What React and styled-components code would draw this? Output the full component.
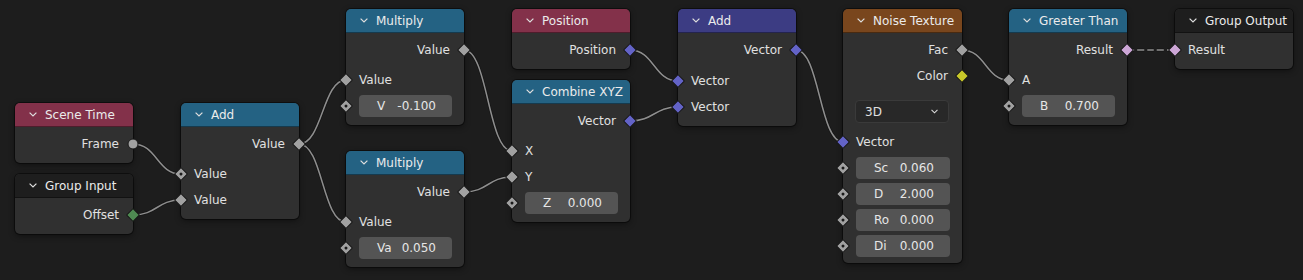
import React from "react";
import styled, { createGlobalStyle } from "styled-components";

const HEADER_H = 24;
const PAD_TOP = 4;
const ROW_H = 26;
const GAP_H = 4;
const DROP_H = 40;

const HEAD = {
  input: "#83314a",
  converter: "#246283",
  vector: "#3c3c83",
  texture: "#79461d",
  group: "#1e1e1e",
};

const SOCK = {
  float: "#a1a1a1",
  vector: "#6363c7",
  color: "#c7c729",
  bool: "#cca6d6",
  int: "#4f8a52",
};

const nodes = {
  scene: {
    title: "Scene Time", head: HEAD.input, x: 15, y: 103, w: 118,
    rows: [{ kind: "out", label: "Frame", sock: SOCK.float, shape: "circle" }],
  },
  groupIn: {
    title: "Group Input", head: HEAD.group, x: 15, y: 174, w: 118,
    rows: [{ kind: "out", label: "Offset", sock: SOCK.int }],
  },
  add: {
    title: "Add", head: HEAD.converter, x: 181, y: 103, w: 118,
    rows: [
      { kind: "out", label: "Value", sock: SOCK.float },
      { kind: "gap" },
      { kind: "in", label: "Value", sock: SOCK.float, shape: "dot" },
      { kind: "in", label: "Value", sock: SOCK.float },
    ],
  },
  mul1: {
    title: "Multiply", head: HEAD.converter, x: 346, y: 9, w: 118,
    rows: [
      { kind: "out", label: "Value", sock: SOCK.float },
      { kind: "gap" },
      { kind: "in", label: "Value", sock: SOCK.float },
      { kind: "field", label: "V", value: "-0.100", sock: SOCK.float, shape: "dot" },
    ],
  },
  mul2: {
    title: "Multiply", head: HEAD.converter, x: 346, y: 151, w: 118,
    rows: [
      { kind: "out", label: "Value", sock: SOCK.float },
      { kind: "gap" },
      { kind: "in", label: "Value", sock: SOCK.float },
      { kind: "field", label: "Va", value: "0.050", sock: SOCK.float, shape: "dot" },
    ],
  },
  position: {
    title: "Position", head: HEAD.input, x: 512, y: 9, w: 118,
    rows: [{ kind: "out", label: "Position", sock: SOCK.vector }],
  },
  combine: {
    title: "Combine XYZ", head: HEAD.converter, x: 512, y: 80, w: 118,
    rows: [
      { kind: "out", label: "Vector", sock: SOCK.vector },
      { kind: "gap" },
      { kind: "in", label: "X", sock: SOCK.float },
      { kind: "in", label: "Y", sock: SOCK.float },
      { kind: "field", label: "Z", value: "0.000", sock: SOCK.float, shape: "dot" },
    ],
  },
  vadd: {
    title: "Add", head: HEAD.vector, x: 678, y: 9, w: 118,
    rows: [
      { kind: "out", label: "Vector", sock: SOCK.vector },
      { kind: "gap", size: 5 },
      { kind: "in", label: "Vector", sock: SOCK.vector },
      { kind: "in", label: "Vector", sock: SOCK.vector },
    ],
  },
  noise: {
    title: "Noise Texture", head: HEAD.texture, x: 843, y: 9, w: 119, padBottom: 4,
    rows: [
      { kind: "out", label: "Fac", sock: SOCK.float },
      { kind: "out", label: "Color", sock: SOCK.color },
      { kind: "drop", label: "3D" },
      { kind: "in", label: "Vector", sock: SOCK.vector },
      { kind: "field", label: "Sc", value: "0.060", sock: SOCK.float, shape: "dot" },
      { kind: "field", label: "D", value: "2.000", sock: SOCK.float, shape: "dot" },
      { kind: "field", label: "Ro", value: "0.000", sock: SOCK.float, shape: "dot" },
      { kind: "field", label: "Di", value: "0.000", sock: SOCK.float, shape: "dot" },
    ],
  },
  greater: {
    title: "Greater Than", head: HEAD.converter, x: 1009, y: 9, w: 118,
    rows: [
      { kind: "out", label: "Result", sock: SOCK.bool },
      { kind: "gap" },
      { kind: "in", label: "A", sock: SOCK.float },
      { kind: "field", label: "B", value: "0.700", sock: SOCK.float, shape: "dot" },
    ],
  },
  groupOut: {
    title: "Group Output", head: HEAD.group, x: 1175, y: 9, w: 118,
    rows: [{ kind: "in", label: "Result", sock: SOCK.bool }],
  },
};

const links = [
  ["scene", 0, "add", 2],
  ["groupIn", 0, "add", 3],
  ["add", 0, "mul1", 2],
  ["add", 0, "mul2", 2],
  ["mul1", 0, "combine", 2],
  ["mul2", 0, "combine", 3],
  ["position", 0, "vadd", 2],
  ["combine", 0, "vadd", 3],
  ["vadd", 0, "noise", 3],
  ["noise", 0, "greater", 2],
  ["greater", 0, "groupOut", 0, true],
];

const rowHeight = (r) =>
  r.kind === "gap" ? r.size || GAP_H : r.kind === "drop" ? DROP_H : ROW_H;

const socketPos = (id, index) => {
  const n = nodes[id];
  let y = n.y + HEADER_H + PAD_TOP;
  for (let i = 0; i < index; i++) y += rowHeight(n.rows[i]);
  const out = n.rows[index].kind === "out";
  return { x: out ? n.x + n.w : n.x, y: y + ROW_H / 2 };
};

const linkPath = (a, b) => {
  const h = Math.abs(b.x - a.x) * 0.5;
  return `M${a.x} ${a.y} C${a.x + h} ${a.y}, ${b.x - h} ${b.y}, ${b.x} ${b.y}`;
};

const GlobalStyle = createGlobalStyle`
  html, body {
    margin: 0;
    padding: 0;
    background: #1d1d1d;
  }
  body {
    font-family: "DejaVu Sans", "Liberation Sans", sans-serif;
    font-size: 12px;
    color: #e0e0e0;
  }
`;

const Canvas = styled.div`
  position: relative;
  width: 1303px;
  height: 280px;
  overflow: hidden;
  background: #1d1d1d;
`;

const Wires = styled.svg`
  position: absolute;
  left: 0;
  top: 0;
`;

const NodeBox = styled.div`
  position: absolute;
  left: ${(p) => p.$x}px;
  top: ${(p) => p.$y}px;
  width: ${(p) => p.$w}px;
  display: flex;
  flex-direction: column;
  background: #303030;
  border-radius: 5px;
  box-shadow: 0 0 0 1px rgba(0, 0, 0, 0.45), 0 2px 6px rgba(0, 0, 0, 0.45);
`;

const Header = styled.div`
  height: ${HEADER_H - 1}px;
  display: flex;
  align-items: center;
  gap: 8px;
  padding-left: 14px;
  background: ${(p) => p.$color};
  border-bottom: 1px solid rgba(0, 0, 0, 0.4);
  border-radius: 5px 5px 0 0;
  color: #ebebeb;
  white-space: nowrap;
  overflow: hidden;
`;

const Body = styled.div`
  display: flex;
  flex-direction: column;
  padding: ${PAD_TOP}px 0 ${(p) => p.$padBottom}px;
`;

const Row = styled.div`
  position: relative;
  height: ${ROW_H}px;
  display: flex;
  align-items: center;
  justify-content: ${(p) => (p.$out ? "flex-end" : "flex-start")};
  padding: ${(p) => (p.$out ? "0 14px 0 0" : "0 0 0 13px")};
`;

const Gap = styled.div`
  height: ${(p) => p.$size}px;
`;

const Field = styled.div`
  flex: 1;
  height: 22px;
  margin-right: 12px;
  display: flex;
  align-items: center;
  justify-content: space-between;
  padding: 0 16px 0 18px;
  background: #545454;
  border-radius: 4px;
  color: #e6e6e6;
`;

const Dropdown = styled.div`
  height: 21px;
  margin: 11px 13px 6px 12px;
  display: flex;
  align-items: center;
  justify-content: space-between;
  padding: 0 10px 0 9px;
  background: #282828;
  border: 1px solid #3a3a3a;
  border-radius: 4px;
`;

const Socket = styled.span`
  position: absolute;
  top: 50%;
  ${(p) => (p.$out ? "right: 0;" : "left: 0;")}
  width: ${(p) => (p.$shape === "circle" ? 11 : 10)}px;
  height: ${(p) => (p.$shape === "circle" ? 11 : 10)}px;
  box-sizing: border-box;
  background: ${(p) => p.$color};
  border: 1px solid #181818;
  border-radius: ${(p) => (p.$shape === "circle" ? "50%" : "1px")};
  transform: translate(${(p) => (p.$out ? "50%" : "-50%")}, -50%)
    rotate(${(p) => (p.$shape === "circle" ? 0 : 45)}deg);

  &::after {
    content: "";
    display: ${(p) => (p.$shape === "dot" ? "block" : "none")};
    position: absolute;
    left: 50%;
    top: 50%;
    width: 3px;
    height: 3px;
    border-radius: 50%;
    background: #1a1a1a;
    transform: translate(-50%, -50%);
  }
`;

const Chevron = ({ w = 8 }) => (
  <svg width={w} height="5" viewBox="0 0 8 5">
    <polyline
      points="0.6,0.6 4,4 7.4,0.6"
      fill="none"
      stroke="#dcdcdc"
      strokeWidth="1.2"
    />
  </svg>
);

const NodeRow = ({ row }) => {
  if (row.kind === "gap") return <Gap $size={row.size || GAP_H} />;
  if (row.kind === "drop")
    return (
      <Dropdown>
        <span>{row.label}</span>
        <Chevron w={7} />
      </Dropdown>
    );
  const out = row.kind === "out";
  return (
    <Row $out={out}>
      {row.kind === "field" ? (
        <Field>
          <span>{row.label}</span>
          <span>{row.value}</span>
        </Field>
      ) : (
        <span>{row.label}</span>
      )}
      <Socket $out={out} $color={row.sock} $shape={row.shape} />
    </Row>
  );
};

const Node = ({ node }) => (
  <NodeBox $x={node.x} $y={node.y} $w={node.w}>
    <Header $color={node.head}>
      <Chevron />
      <span>{node.title}</span>
    </Header>
    <Body $padBottom={node.padBottom ?? 6}>
      {node.rows.map((r, i) => (
        <NodeRow key={i} row={r} />
      ))}
    </Body>
  </NodeBox>
);

export default function App() {
  return (
    <>
      <GlobalStyle />
      <Canvas>
        <Wires width="1303" height="280">
          {links.map(([a, ai, b, bi, dashed], i) => {
            const d = linkPath(socketPos(a, ai), socketPos(b, bi));
            const dash = dashed ? "7 3" : undefined;
            return (
              <g key={i} fill="none">
                <path d={d} stroke="#151515" strokeWidth="3" strokeDasharray={dash} />
                <path d={d} stroke="#8e8e8e" strokeWidth="1.5" strokeDasharray={dash} />
              </g>
            );
          })}
        </Wires>
        {Object.entries(nodes).map(([id, n]) => (
          <Node key={id} node={n} />
        ))}
      </Canvas>
    </>
  );
}
